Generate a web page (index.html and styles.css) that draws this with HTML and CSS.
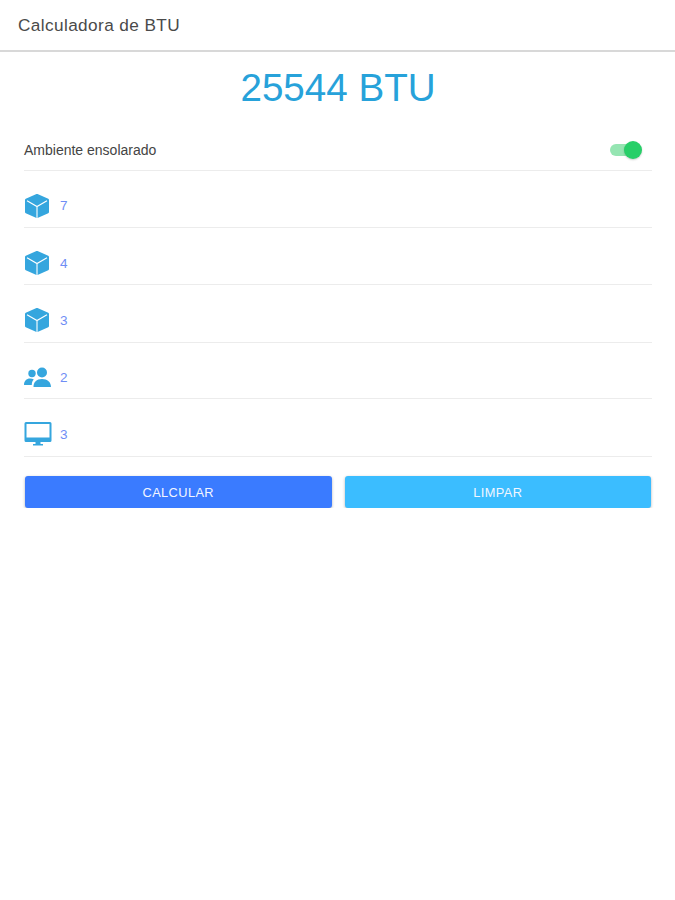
FILE: index.html

```html
<!DOCTYPE html>
<html lang="pt-BR">
<head>
  <meta charset="UTF-8">
  <meta name="viewport" content="width=device-width, initial-scale=1.0">
  <title>Calculadora de BTU</title>
  <link rel="stylesheet" href="styles.css">
</head>
<body>
  <header class="app-bar">Calculadora de BTU</header>

  <main class="content">
    <h1 class="result">25544 BTU</h1>

    <div class="row row-switch">
      <span class="switch-label">Ambiente ensolarado</span>
      <span class="switch"><span class="switch-thumb"></span></span>
    </div>

    <div class="row">
      <svg class="icon" viewBox="0 0 24 24"><path class="cube" d="M12 1.300 22.700 6v12L12 22.700 1.300 18V6z"/><path class="cube-lines" d="M2 6.800 12 12.500l10-5.700M12 12.500V24"/></svg>
      <span class="value">7</span>
    </div>
    <div class="row row-b">
      <svg class="icon" viewBox="0 0 24 24"><path class="cube" d="M12 1.300 22.700 6v12L12 22.700 1.300 18V6z"/><path class="cube-lines" d="M2 6.800 12 12.500l10-5.700M12 12.500V24"/></svg>
      <span class="value">4</span>
    </div>
    <div class="row">
      <svg class="icon" viewBox="0 0 24 24"><path class="cube" d="M12 1.300 22.700 6v12L12 22.700 1.300 18V6z"/><path class="cube-lines" d="M2 6.800 12 12.500l10-5.700M12 12.500V24"/></svg>
      <span class="value">3</span>
    </div>
    <div class="row row-c">
      <svg class="icon icon-wide" viewBox="0 0 28 24"><circle cx="18" cy="7.500" r="5"/><circle cx="8" cy="8.500" r="3.700"/><path d="M9.500 22c0-5 3-8 8.500-8s9 3 9 8zM7.800 20H0c0-4 2.500-6.500 6-6.500 1.500 0 2.800.4 3.800 1-1.300 1.300-2 3.200-2 5.500z"/></svg>
      <span class="value">2</span>
    </div>
    <div class="row row-d">
      <svg class="icon icon-wide" viewBox="0 0 28 24"><path fill-rule="evenodd" d="M2 0h24a1.500 1.500 0 0 1 1.500 1.500v17A1.500 1.500 0 0 1 26 20H2a1.500 1.500 0 0 1-1.500-1.500v-17A1.500 1.500 0 0 1 2 0zM2.500 2v13.500h23V2zM11.500 20h5v2H19v1.500H9V22h2.500z"/></svg>
      <span class="value">3</span>
    </div>

    <div class="actions">
      <button class="btn btn-calc">CALCULAR</button>
      <button class="btn btn-clear">LIMPAR</button>
    </div>
  </main>
</body>
</html>
```

FILE: styles.css

```css
body {
  font-family: 'Liberation Sans', Arial, sans-serif;
  background-color: #fff;
  margin: 0;
  padding: 0;
  color: #333;
}

.app-bar {
  height: 50px;
  line-height: 50px;
  padding-left: 18px;
  font-size: 17.200px;
  letter-spacing: 0.4px;
  color: #4a4a4a;
  border-bottom: 2px solid #d8d8d8;
}

.content {
  padding: 0 23px 0 24px;
}

.result {
  margin: 0;
  height: 73px;
  line-height: 72px;
  font-size: 38.600px;
  font-weight: normal;
  text-align: center;
  color: #27a2da;
}

.row {
  display: flex;
  align-items: center;
  gap: 11px;
  height: 57.500px;
  padding-top: 14px;
  box-sizing: border-box;
  border-bottom: 1px solid #ececec;
}

.row-b {
  height: 57px;
}

.row-c {
  height: 56px;
}

.row-d {
  height: 58.500px;
}

.row-switch {
  justify-content: space-between;
  height: 45.500px;
  padding-top: 5px;
}

.switch-label {
  font-size: 14px;
  color: #444;
}

.switch {
  position: relative;
  width: 26px;
  height: 12px;
  margin-right: 16px;
  border-radius: 6px;
  background-color: #95e5b2;
}

.switch-thumb {
  position: absolute;
  top: -3px;
  right: -6px;
  width: 18px;
  height: 18px;
  border-radius: 50%;
  background-color: #27cf68;
  box-shadow: 0 1px 2px rgba(0, 0, 0, 0.2);
}

.icon {
  width: 24px;
  height: 24px;
  margin-left: 1px;
  fill: #35a6de;
  flex-shrink: 0;
}

.icon-wide {
  width: 28px;
  margin-left: 0;
  margin-right: -3px;
}

.cube {
  stroke: #35a6de;
  stroke-width: 2.600;
  stroke-linejoin: round;
}

.cube-lines {
  fill: none;
  stroke: #fff;
  stroke-width: 1.100;
}

.value {
  font-size: 13.500px;
  color: #6f8df5;
}

.actions {
  display: flex;
  gap: 13px;
  margin-top: 19px;
  padding: 0 1px;
}

.btn {
  flex: 1;
  height: 32px;
  border: 0;
  border-radius: 3px;
  font-family: inherit;
  font-size: 12.800px;
  letter-spacing: 0.4px;
  color: #f2f6ff;
  box-shadow: 0 1px 3px rgba(0, 0, 0, 0.3);
}

.btn-calc {
  background-color: #3a7bff;
}

.btn-clear {
  background-color: #3bbdff;
}
```
